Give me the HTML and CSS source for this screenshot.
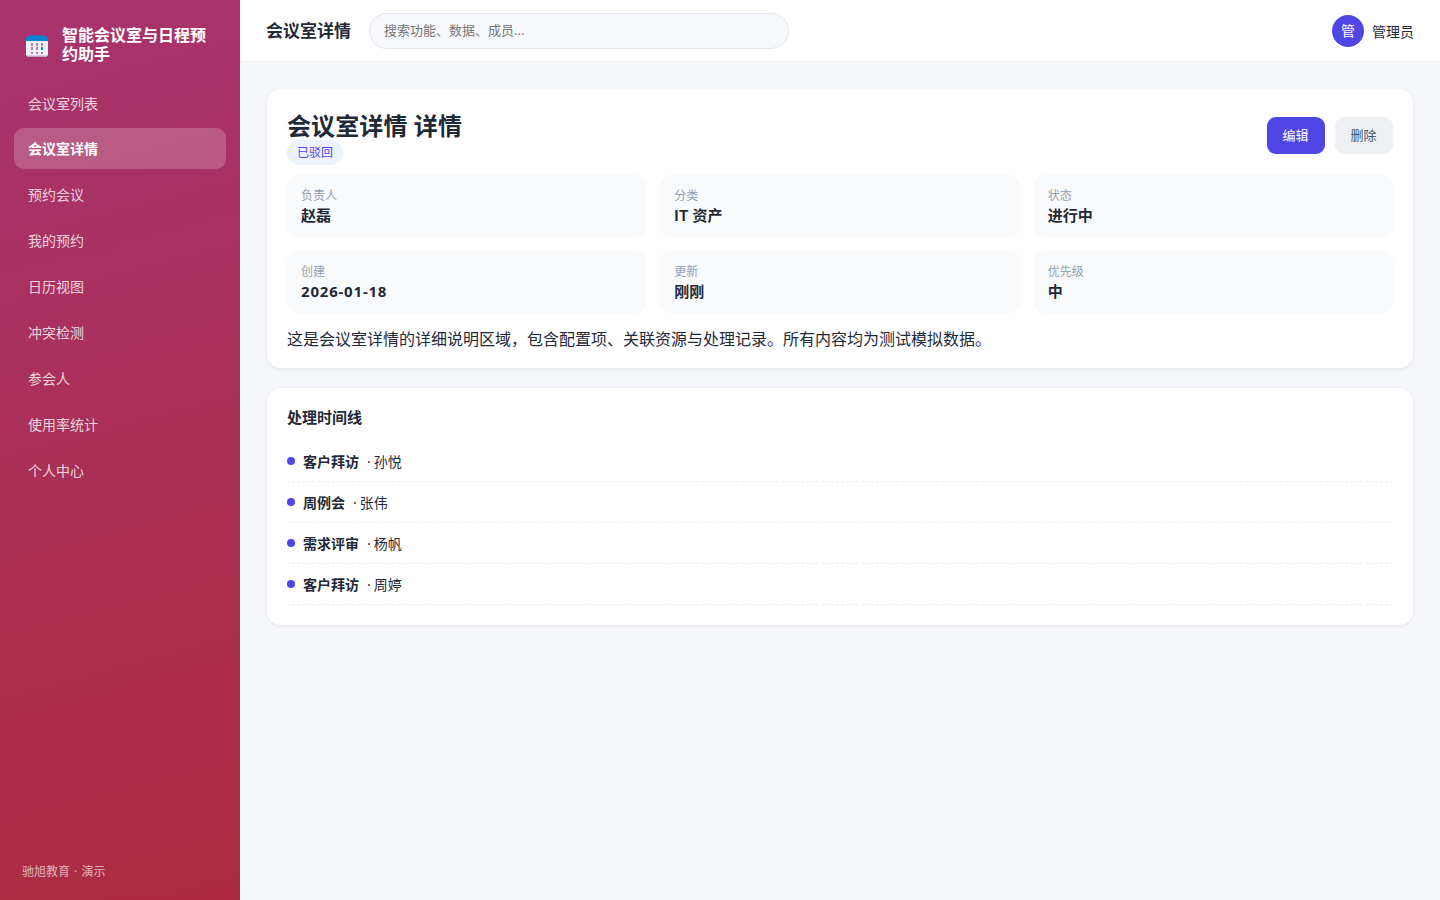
FILE: index.html
```html
<!DOCTYPE html>
<html lang="zh-CN">
<head>
<meta charset="utf-8">
<title>会议室详情</title>
<link rel="stylesheet" href="styles.css">
</head>
<body>
<div class="app">
  <aside class="sidebar">
    <div class="brand">
      <svg class="logo" width="22" height="22" viewBox="0 0 22 22">
        <path d="M0 5H22V20L20 22H2L0 20Z" fill="#f3eef8"/>
        <path d="M1 20.5H21L20 22H2Z" fill="#b9acbf"/>
        <path d="M0 6V3L3 .5H19L22 3V6Z" fill="#0784d1"/>
        <path d="M5 8H7V11H5ZM10 8H12V11H10ZM15 8H17V11H15ZM5 12H7V15H5ZM10 12H12V15H10ZM5 17H7V19H5ZM10 17H12V19H10ZM15 17H17V19H15Z" fill="#978ea4"/>
        <path d="M15 12H17V15H15Z" fill="#0784d1"/>
      </svg>
      <span class="brand-name">智能会议室与日程预约助手</span>
    </div>
    <nav class="nav">
      <a class="nav-item">会议室列表</a>
      <a class="nav-item active">会议室详情</a>
      <a class="nav-item">预约会议</a>
      <a class="nav-item">我的预约</a>
      <a class="nav-item">日历视图</a>
      <a class="nav-item">冲突检测</a>
      <a class="nav-item">参会人</a>
      <a class="nav-item">使用率统计</a>
      <a class="nav-item">个人中心</a>
    </nav>
    <div class="side-foot">驰旭教育 · 演示</div>
  </aside>
  <div class="main">
    <header class="topbar">
      <div class="page-title">会议室详情</div>
      <input class="search" placeholder="搜索功能、数据、成员...">
      <div class="user"><span class="avatar">管</span><span>管理员</span></div>
    </header>
    <main class="content">
      <section class="card detail">
        <div class="detail-head">
          <div class="heading">
            <h2 class="detail-title">会议室详情 详情</h2>
            <span class="badge">已驳回</span>
          </div>
          <div class="actions">
            <button class="btn primary">编辑</button>
            <button class="btn">删除</button>
          </div>
        </div>
        <div class="grid">
          <div class="cell"><span class="label">负责人</span><b class="value">赵磊</b></div>
          <div class="cell"><span class="label">分类</span><b class="value"><span class="latin">IT</span> 资产</b></div>
          <div class="cell"><span class="label">状态</span><b class="value">进行中</b></div>
          <div class="cell"><span class="label">创建</span><b class="value date">2026-01-18</b></div>
          <div class="cell"><span class="label">更新</span><b class="value">刚刚</b></div>
          <div class="cell"><span class="label">优先级</span><b class="value">中</b></div>
        </div>
        <p class="desc">这是会议室详情的详细说明区域，包含配置项、关联资源与处理记录。所有内容均为测试模拟数据。</p>
      </section>
      <section class="card timeline">
        <h3 class="timeline-title">处理时间线</h3>
        <div class="event"><i class="dot"></i><b class="event-name">客户拜访</b><span>·</span><span>孙悦</span></div>
        <div class="event"><i class="dot"></i><b class="event-name">周例会</b><span>·</span><span>张伟</span></div>
        <div class="event"><i class="dot"></i><b class="event-name">需求评审</b><span>·</span><span>杨帆</span></div>
        <div class="event"><i class="dot"></i><b class="event-name">客户拜访</b><span>·</span><span>周婷</span></div>
      </section>
    </main>
  </div>
</div>
</body>
</html>
```

FILE: styles.css
```css
* { box-sizing: border-box; }
body {
  margin: 0;
  font-family: "Noto Sans", "Noto Sans CJK SC", sans-serif;
  font-size: 14px;
  color: #1f2937;
  background: #f5f7fb;
  text-spacing-trim: space-all;
}
.app { display: flex; height: 900px; }
.sidebar {
  width: 240px;
  flex: none;
  display: flex;
  flex-direction: column;
  padding: 26px 14px 18px;
  color: #fff;
  background: linear-gradient(165deg, #a8336e, #ad2c40);
}
.brand { display: flex; align-items: center; gap: 14px; padding: 0 12px; height: 38px; }
.logo { flex: none; margin-top: 2px; }
.brand-name { font-size: 16px; font-weight: 700; line-height: 19px; }
.nav { display: flex; flex-direction: column; gap: 5px; margin-top: 18px; }
.nav-item {
  height: 41px;
  line-height: 42px;
  padding: 0 14px;
  border-radius: 10px;
  color: rgba(255, 255, 255, .8);
}
.nav-item:first-child { padding-top: 1px; }
.nav-item.active { background: rgba(255, 255, 255, .2); color: #fff; font-weight: 700; }
.side-foot { margin-top: auto; padding: 0 8px; font-size: 12px; line-height: 20px; word-spacing: 1px; color: rgba(255, 255, 255, .65); }
.main { flex: 1; min-width: 0; }
.topbar {
  display: flex;
  align-items: center;
  height: 62px;
  padding: 0 26px;
  background: #fff;
  border-bottom: 1px solid #eceef2;
}
.page-title { font-size: 17px; font-weight: 700; margin-right: 18px; line-height: 24px; }
.search {
  width: 420px;
  height: 36px;
  padding: 0 14px 2px;
  border: 1px solid #e2e5ed;
  border-radius: 18px;
  background: #f7f8fc;
  font: 13px "Noto Sans", "Noto Sans CJK SC", sans-serif;
}
.search::placeholder { color: #757575; }
.user { margin-left: auto; display: flex; align-items: center; gap: 8px; }
.avatar {
  width: 32px;
  height: 32px;
  border-radius: 50%;
  background: #4f46e5;
  color: #fff;
  text-align: center;
  line-height: 32px;
}
.content { padding: 27px 26px; display: flex; flex-direction: column; gap: 20px; }
.card { background: #fff; border-radius: 14px; box-shadow: 0 1px 4px rgba(20, 30, 60, .08); margin: 0 1px; padding: 20px; }
.detail { height: 279px; }
.detail-head { display: flex; justify-content: space-between; align-items: flex-start; height: 55px; }
.heading { padding-top: 3px; }
.detail-title { margin: 0; font-size: 24px; line-height: 28px; font-weight: 700; letter-spacing: .1px; }
.badge {
  display: block;
  width: fit-content;
  height: 25px;
  padding: 0 10px;
  border-radius: 13px;
  background: #eef2ff;
  color: #4f46e5;
  font-size: 12px;
  line-height: 25px;
}
.actions { display: flex; gap: 10px; padding-top: 8px; }
.btn {
  width: 58px;
  height: 37px;
  padding: 0 1px 2px 0;
  border: 0;
  border-radius: 9px;
  background: #eeeff3;
  color: #475569;
  font: 13px "Noto Sans", "Noto Sans CJK SC", sans-serif;
}
.btn.primary { background: #4f46e5; color: #fff; }
.grid { display: grid; grid-template-columns: repeat(3, 1fr); gap: 14px; margin-top: 11px; }
.cell { height: 62px; padding: 11px 14px; border-radius: 10px; background: #f9fafc; }
.label { display: block; font-size: 12px; line-height: 19px; color: #94a0b3; }
.value { display: block; font-size: 15px; line-height: 21px; }
.latin { font-family: Roboto, "Liberation Sans", sans-serif; letter-spacing: .4px; }
.date { letter-spacing: .8px; }
.desc { margin: 14px 0 0; font-size: 16px; line-height: 24px; }
.timeline { height: 237px; padding-top: 19px; }
.timeline-title { margin: 0; font-size: 15px; line-height: 20px; }
.event { display: flex; align-items: center; height: 41px; border-bottom: 1px dashed #eceef1; }
.timeline-title + .event { margin-top: 14px; }
.dot { width: 8px; height: 8px; border-radius: 50%; background: #4f46e5; margin-right: 8px; }
.event-name { margin-right: 8px; }
.event span:last-child { margin-left: 3px; }
```
